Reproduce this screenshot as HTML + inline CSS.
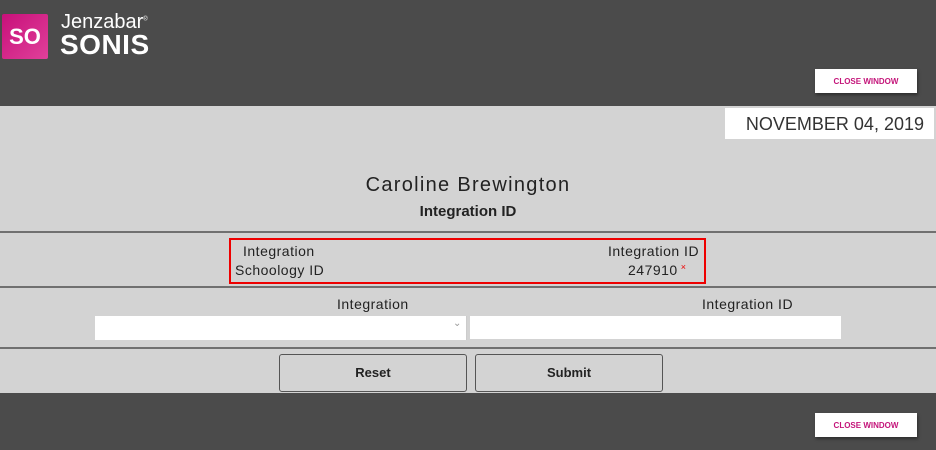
<!DOCTYPE html><html><head><style>
*{margin:0;padding:0;box-sizing:border-box}
body{width:936px;height:450px;background:#d3d3d3;font-family:"Liberation Sans",sans-serif;position:relative;overflow:hidden;color:#222}
.a{position:absolute}
.dark{background:#4b4b4b;left:0;width:936px}
.cw{background:#fff;color:#c4157a;font-size:8px;font-weight:bold;text-align:center;line-height:25px;width:102px;height:24px;left:815px;box-shadow:1px 2px 3px rgba(0,0,0,.4)}
.line{left:0;width:936px;height:2px;background:#707070}
.btn{border:1px solid #555;border-radius:3px;background:#d3d3d3;font-weight:bold;font-size:13px;text-align:center;line-height:36px;width:188px;height:38px;top:354px}
.t{font-size:14px;letter-spacing:0.5px}
</style></head><body>
<div class="a dark" style="top:0;height:106px"></div>
<div class="a" style="left:2px;top:14px;width:46px;height:45px;background:linear-gradient(135deg,#c8107a,#e0409a);border-radius:2px;color:#fff;font-size:22px;line-height:45px;text-align:center;font-weight:bold">SO</div>
<div class="a" style="left:61px;top:11px;color:#fff;font-size:20px">Jenzabar<sup style="font-size:6px">®</sup></div>
<div class="a" style="left:60px;top:29px;color:#fff;font-size:28px;font-weight:bold;letter-spacing:0.5px">SONIS</div>
<div class="a cw" style="top:69px">CLOSE WINDOW</div>
<div class="a" style="left:725px;top:108px;width:209px;height:31px;background:#fff;font-size:18px;color:#333;text-align:right;padding-right:10px;line-height:32px">NOVEMBER 04, 2019</div>
<div class="a" style="left:0;width:936px;top:174px;text-align:center;font-size:20px;letter-spacing:1.3px">Caroline Brewington</div>
<div class="a" style="left:0;width:936px;top:203px;text-align:center;font-size:15px;font-weight:bold">Integration ID</div>
<div class="a line" style="top:231px"></div>
<div class="a" style="left:229px;top:238px;width:477px;height:46px;border:2px solid #e00"></div>
<div class="a t" style="left:243px;top:243px">Integration</div>
<div class="a t" style="left:608px;top:243px">Integration ID</div>
<div class="a t" style="left:235px;top:262px">Schoology ID</div>
<div class="a t" style="left:628px;top:262px">247910<span style="color:#e00;font-size:9px;vertical-align:top"> ×</span></div>
<div class="a line" style="top:286px"></div>
<div class="a t" style="left:337px;top:296px">Integration</div>
<div class="a t" style="left:702px;top:296px">Integration ID</div>
<div class="a" style="left:95px;top:316px;width:372px;height:24px;background:#fff;border-right:1px solid #ccc"></div>
<div class="a" style="left:453px;top:318px;color:#999;font-size:10px">⌄</div>
<div class="a" style="left:470px;top:316px;width:371px;height:23px;background:#fff"></div>
<div class="a line" style="top:347px"></div>
<div class="a btn" style="left:279px">Reset</div>
<div class="a btn" style="left:475px">Submit</div>
<div class="a dark" style="top:393px;height:57px"></div>
<div class="a cw" style="top:413px">CLOSE WINDOW</div>
</body></html>
